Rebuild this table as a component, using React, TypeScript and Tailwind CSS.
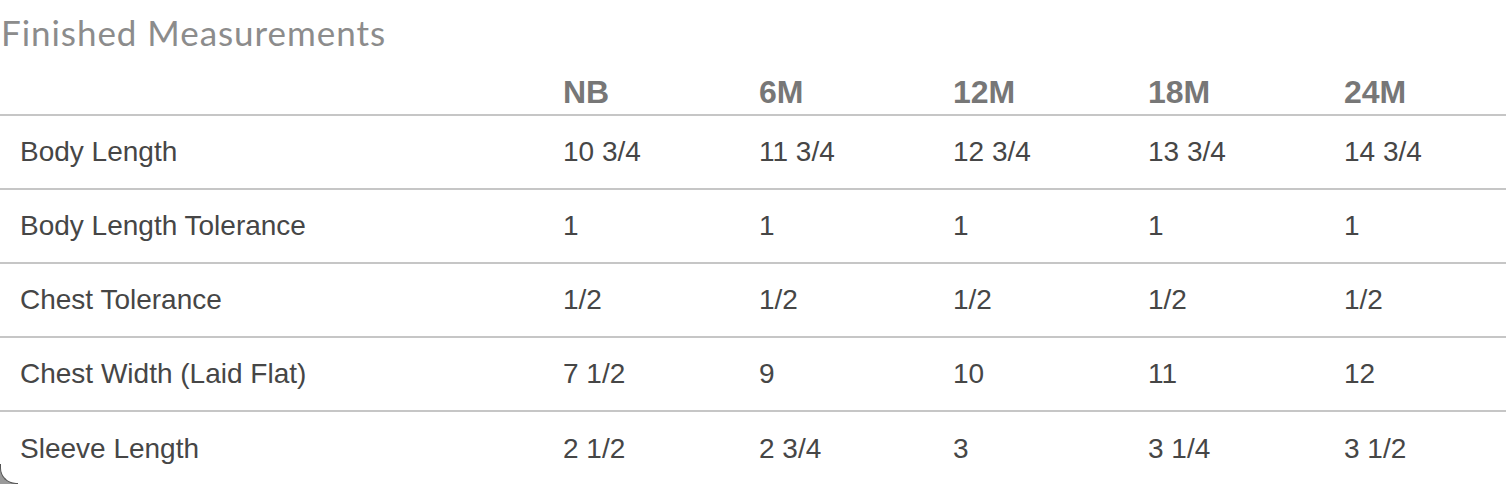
import React from "react";

const cols = ["NB", "6M", "12M", "18M", "24M"];
const rows: [string, string[]][] = [
  ["Body Length", ["10 3/4", "11 3/4", "12 3/4", "13 3/4", "14 3/4"]],
  ["Body Length Tolerance", ["1", "1", "1", "1", "1"]],
  ["Chest Tolerance", ["1/2", "1/2", "1/2", "1/2", "1/2"]],
  ["Chest Width (Laid Flat)", ["7 1/2", "9", "10", "11", "12"]],
  ["Sleeve Length", ["2 1/2", "2 3/4", "3", "3 1/4", "3 1/2"]],
];

export default function App() {
  return (
    <div className="relative w-[1506px] h-[484px] overflow-hidden bg-white">
      <div className="h-[68px] flex items-center pl-[1px] pb-[3px] text-[35px] tracking-[0.95px] text-[#8c8c8c] font-['Lato',sans-serif] leading-none">
        Finished Measurements
      </div>
      <div className="font-['Liberation_Sans',Arial,sans-serif]">
        <div className="grid grid-cols-[543px_196px_194px_195px_196px_1fr] h-[48px] items-center border-b-2 border-[#c6c6c6] text-[32px] font-bold text-[#777777]">
          <div />
          {cols.map((c) => (
            <div key={c} className="pl-[20px]">{c}</div>
          ))}
        </div>
        {rows.map(([label, vals], i) => (
          <div
            key={label}
            className={
              "grid grid-cols-[543px_196px_194px_195px_196px_1fr] h-[74px] items-center text-[28px] text-[#464646] " +
              (i < rows.length - 1 ? "border-b-2 border-[#c6c6c6]" : "")
            }
          >
            <div className="pl-[20px]">{label}</div>
            {vals.map((v, j) => (
              <div key={j} className="pl-[20px]">{v}</div>
            ))}
          </div>
        ))}
      </div>
      <div className="absolute left-0 bottom-0 w-[18px] h-[20px] bg-[#9a9a9a]">
        <div className="w-full h-full bg-white rounded-bl-[16px] border-l border-b border-[#555555]" />
      </div>
    </div>
  );
}
